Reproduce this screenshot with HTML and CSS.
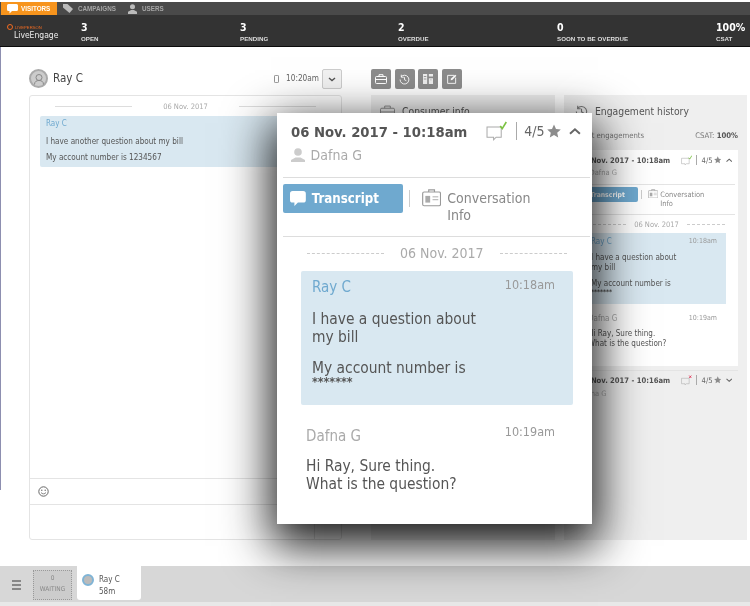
FILE: index.html
```html
<!DOCTYPE html>
<html lang="en">
<head>
<meta charset="utf-8">
<title>LiveEngage</title>
<link rel="stylesheet" href="styles.css">
</head>
<body>
<div class="app">
  <nav class="nav">
    <a class="nav-item active"><svg width="11" height="10" viewBox="0 0 11 10"><path d="M1.500 0h8A1.500 1.500 0 0 1 11 1.500v4A1.500 1.500 0 0 1 9.500 7H5L2.500 9.500V7h-1A1.500 1.500 0 0 1 0 5.500v-4A1.500 1.500 0 0 1 1.500 0z" fill="#fff"/></svg>VISITORS</a>
    <a class="nav-item"><svg width="10" height="9" viewBox="0 0 10 9"><path d="M0 0h4.500L10 5 6.500 9 0 3.500z" fill="#bbb"/></svg>CAMPAIGNS</a>
    <a class="nav-item"><svg width="9" height="10" viewBox="0 0 10 11"><circle cx="5" cy="3" r="2.800" fill="#bbb"/><path d="M0 11V8.500L3.500 6.500h3L10 8.500V11z" fill="#bbb"/></svg>USERS</a>
  </nav>
  <header class="stats">
    <div class="logo">
      <div class="logo-top"><span class="logo-ring"></span>LIVEPERSON</div>
      <div class="logo-name">LiveEngage</div>
    </div>
    <div class="stat-grid">
      <div class="stat"><b>3</b><span>OPEN</span></div>
      <div class="stat"><b>3</b><span>PENDING</span></div>
      <div class="stat"><b>2</b><span>OVERDUE</span></div>
      <div class="stat"><b>0</b><span>SOON TO BE OVERDUE</span></div>
      <div class="stat"><b>100%</b><span>CSAT</span></div>
    </div>
  </header>

  <main class="main">
    <div class="rail"></div>
    <section class="chat-col">
      <div class="chat-head">
        <span class="avatar"><svg width="12" height="12" viewBox="0 0 12 12"><circle cx="6" cy="4.500" r="3" fill="none" stroke="#888"/><path d="M1.500 11.500c0-3 2-4 4.500-4s4.500 1 4.500 4" fill="none" stroke="#888"/></svg></span>
        <span class="chat-name">Ray C</span>
        <svg class="phone" width="5" height="8" viewBox="0 0 6 10"><rect x=".5" y=".5" width="5" height="9" rx="1" fill="none" stroke="#777"/></svg>
        <span class="chat-time">10:20am</span>
        <span class="drop"><svg width="8" height="5" viewBox="0 0 8 5"><path d="M1 1l3 2.500L7 1" fill="none" stroke="#555" stroke-width="1.400"/></svg></span>
      </div>
      <div class="chat-box">
        <div class="chat-log">
          <div class="chat-date"><i></i><span>06 Nov. 2017</span><i></i></div>
          <div class="chat-bubble">
            <div class="chat-who">Ray C</div>
            <p>I have another question about my bill</p>
            <p>My account number is 1234567</p>
          </div>
        </div>
        <div class="emoji-row"><svg width="11" height="11" viewBox="0 0 11 11"><circle cx="5.500" cy="5.500" r="4.700" fill="none" stroke="#666"/><circle cx="3.800" cy="4.300" r=".7" fill="#666"/><circle cx="7.200" cy="4.300" r=".7" fill="#666"/><path d="M3 6.500c1 1.800 4 1.800 5 0" fill="none" stroke="#666" stroke-width=".8"/></svg></div>
        <div class="input-row"><span class="send"></span></div>
      </div>
    </section>

    <section class="side-col">
      <div class="tools">
        <span class="tool"><svg width="12" height="10" viewBox="0 0 12 10"><rect x=".5" y="2.500" width="11" height="7" rx="1" fill="none" stroke="#fff"/><path d="M4 2.500V.7h4v1.800M.5 5.500h11" fill="none" stroke="#fff"/></svg></span>
        <span class="tool"><svg width="11" height="11" viewBox="0 0 12 12"><path d="M2.200 3.200A4.800 4.800 0 1 1 1.200 6" fill="none" stroke="#fff"/><path d="M2.500 .8v2.700h2.700" fill="none" stroke="#fff"/><path d="M6 3.500V6.300l2 1" fill="none" stroke="#fff"/></svg></span>
        <span class="tool"><svg width="10" height="10" viewBox="0 0 12 12"><path d="M0 0h5v12H0zM7 0h5v3H7zM7 5h5v7H7z" fill="#eee"/><path d="M1 3h3M1 6h3M9 7h1" stroke="#8c8c8c"/></svg></span>
        <span class="tool"><svg width="10" height="10" viewBox="0 0 11 11"><path d="M8 1.500H.7v8.800h8.800V4" fill="none" stroke="#fff"/><path d="M4 7l.5-2L9 .7l1.300 1.300L5.800 6.500z" fill="#fff"/></svg></span>
      </div>
      <div class="panels">
        <div class="panel panel-consumer">
          <div class="panel-head"><svg width="15" height="13" viewBox="0 0 16 13"><rect x=".5" y="3" width="15" height="9.500" rx="1.500" fill="none" stroke="#888"/><path d="M5 3V.7h6V3M.5 7h15" fill="none" stroke="#888"/></svg>Consumer info</div>
        </div>
        <div class="panel panel-history">
          <div class="panel-head"><svg width="13" height="13" viewBox="0 0 12 12"><path d="M2.200 3.200A4.800 4.800 0 1 1 1.200 6" fill="none" stroke="#777"/><path d="M2.500 .8v2.700h2.700" fill="none" stroke="#777"/><path d="M6 3.500V6.300l2 1" fill="none" stroke="#777"/></svg>Engagement history</div>
          <div class="panel-sub"><span>Past engagements</span><span>CSAT: <b>100%</b></span></div>

          <article class="card card-mini">
            <div class="card-top">
              <div class="card-title">06 Nov. 2017 - 10:18am</div>
              <div class="rating">
                <svg class="bubble-icon" viewBox="0 0 20 20"><path d="M1 6h14v10H10l-2.500 2.500V16H1z" fill="none" stroke="#aaa"/><path d="M14 5l2 2.500L20 1" fill="none" stroke="#7cc243" stroke-width="1.600"/></svg>
                <i class="rate-sep"></i><span>4/5</span>
                <svg class="star" viewBox="0 0 14 14"><path d="M7 .5l2 4.500 4.800.5-3.600 3.200 1 4.800L7 11l-4.200 2.500 1-4.800L.2 5.500 5 5z" fill="#8c8c8c"/></svg>
                <svg class="chev" viewBox="0 0 12 8"><path d="M1 6.500L6 2l5 4.500" fill="none" stroke="#666" stroke-width="2"/></svg>
              </div>
            </div>
            <div class="card-agent"><svg class="agent-icon" viewBox="0 0 14 15"><circle cx="7" cy="4" r="3.800" fill="#ccc"/><path d="M0 15v-3l4.500-2.500h5L14 12v3z" fill="#ccc"/></svg>Dafna G</div>
            <div class="card-tabs">
              <span class="btn-transcript"><svg class="btn-icon" viewBox="0 0 18 17"><path d="M3 0h12a3 3 0 0 1 3 3v7a3 3 0 0 1-3 3H9l-4 4v-4H3a3 3 0 0 1-3-3V3a3 3 0 0 1 3-3z" fill="#fff"/></svg>Transcript</span>
              <i class="tab-sep"></i>
              <svg class="clip" viewBox="0 0 20 18"><rect x=".7" y="3" width="18.600" height="14.300" rx="1.500" fill="none" stroke="#999" stroke-width="1.200"/><path d="M7 3V.8h6V3" fill="none" stroke="#999" stroke-width="1.200"/><rect x="3.500" y="7" width="5" height="7" fill="#aaa"/><path d="M11 8h6M11 11h6" stroke="#aaa"/></svg>
              <span class="tab-info">Conversation<br>Info</span>
            </div>
            <div class="card-date"><i></i><span>06 Nov. 2017</span><i></i></div>
            <div class="msg msg-in">
              <div class="msg-head"><span class="msg-who">Ray C</span><span class="msg-time">10:18am</span></div>
              <p>I have a question about<br>my bill</p>
              <p>My account number is<span class="stars">*******</span></p>
            </div>
            <div class="msg msg-out">
              <div class="msg-head"><span class="msg-who">Dafna G</span><span class="msg-time">10:19am</span></div>
              <p>Hi Ray, Sure thing.<br>What is the question?</p>
            </div>
          </article>

          <article class="row-closed">
            <div class="card-top">
              <div class="card-title">06 Nov. 2017 - 10:16am</div>
              <div class="rating">
                <svg class="bubble-icon" viewBox="0 0 20 20"><path d="M1 6h14v10H10l-2.500 2.500V16H1z" fill="none" stroke="#aaa"/><path d="M15 1l4 4.500M19 1l-4 4.500" stroke="#e0375a" stroke-width="1.600"/></svg>
                <i class="rate-sep"></i><span>4/5</span>
                <svg class="star" viewBox="0 0 14 14"><path d="M7 .5l2 4.500 4.800.5-3.600 3.200 1 4.800L7 11l-4.200 2.500 1-4.800L.2 5.500 5 5z" fill="#8c8c8c"/></svg>
                <svg class="chev" viewBox="0 0 12 8"><path d="M1 1.500L6 6l5-4.500" fill="none" stroke="#666" stroke-width="2"/></svg>
              </div>
            </div>
            <div class="card-agent">Dafna G</div>
          </article>
        </div>
      </div>
    </section>
  </main>

  <footer class="dock">
    <span class="burger"><i></i><i></i><i></i></span>
    <div class="waiting"><span>0</span><span>WAITING</span></div>
    <div class="visitor-tab">
      <span class="visitor-avatar"></span>
      <div class="visitor-text"><span>Ray C</span><span>58m</span></div>
    </div>
  </footer>

  <article class="card card-popup">
    <div class="card-top">
      <div class="card-title">06 Nov. 2017 - 10:18am</div>
      <div class="rating">
        <svg class="bubble-icon" viewBox="0 0 20 20"><path d="M1 6h14v10H10l-2.500 2.500V16H1z" fill="none" stroke="#aaa"/><path d="M14 5l2 2.500L20 1" fill="none" stroke="#7cc243" stroke-width="1.600"/></svg>
        <i class="rate-sep"></i><span>4/5</span>
        <svg class="star" viewBox="0 0 14 14"><path d="M7 .5l2 4.500 4.800.5-3.600 3.200 1 4.800L7 11l-4.200 2.500 1-4.800L.2 5.500 5 5z" fill="#8c8c8c"/></svg>
        <svg class="chev" viewBox="0 0 12 8"><path d="M1 6.500L6 2l5 4.500" fill="none" stroke="#666" stroke-width="2"/></svg>
      </div>
    </div>
    <div class="card-agent"><svg class="agent-icon" viewBox="0 0 14 15"><circle cx="7" cy="4" r="3.800" fill="#ccc"/><path d="M0 15v-3l4.500-2.500h5L14 12v3z" fill="#ccc"/></svg>Dafna G</div>
    <div class="card-tabs">
      <span class="btn-transcript"><svg class="btn-icon" viewBox="0 0 18 17"><path d="M3 0h12a3 3 0 0 1 3 3v7a3 3 0 0 1-3 3H9l-4 4v-4H3a3 3 0 0 1-3-3V3a3 3 0 0 1 3-3z" fill="#fff"/></svg>Transcript</span>
      <i class="tab-sep"></i>
      <svg class="clip" viewBox="0 0 20 18"><rect x=".7" y="3" width="18.600" height="14.300" rx="1.500" fill="none" stroke="#999" stroke-width="1.200"/><path d="M7 3V.8h6V3" fill="none" stroke="#999" stroke-width="1.200"/><rect x="3.500" y="7" width="5" height="7" fill="#aaa"/><path d="M11 8h6M11 11h6" stroke="#aaa"/></svg>
      <span class="tab-info">Conversation<br>Info</span>
    </div>
    <div class="card-date"><i></i><span>06 Nov. 2017</span><i></i></div>
    <div class="msg msg-in">
      <div class="msg-head"><span class="msg-who">Ray C</span><span class="msg-time">10:18am</span></div>
      <p>I have a question about<br>my bill</p>
      <p>My account number is<span class="stars">*******</span></p>
    </div>
    <div class="msg msg-out">
      <div class="msg-head"><span class="msg-who">Dafna G</span><span class="msg-time">10:19am</span></div>
      <p>Hi Ray, Sure thing.<br>What is the question?</p>
    </div>
  </article>
</div>
</body>
</html>
```

FILE: styles.css
```css
* { box-sizing: border-box; }
html, body { margin: 0; padding: 0; }
body { font-family: "DejaVu Sans Condensed", "DejaVu Sans", sans-serif; font-stretch: condensed; background: #fff; color: #555; }
p { margin: 0; }
.app { position: relative; width: 750px; height: 606px; overflow: hidden; padding-top: 2px; background: #fff; display: flex; flex-direction: column; filter: blur(.35px); }

.nav { flex: none; background: #4a4a4a; display: flex; height: 13px; }
.nav-item { display: flex; align-items: center; gap: 5px; padding-left: 6px; font: bold 6.300px "Liberation Sans", sans-serif; color: #a5a5a5; }
.nav-item svg { flex: none; }
.nav-item:nth-child(1) { margin-left: 1px; width: 56px; gap: 3px; background: #f7941d; color: #fff; }
.nav-item:nth-child(2) { width: 65px; }

.stats { flex: none; height: 32px; background: #333; border-bottom: 1px solid #0c0c0c; display: flex; color: #fff; }
.logo { flex: none; width: 81px; padding: 9px 0 0 7px; }
.logo-top { display: flex; align-items: center; gap: 2px; font: 4.200px "Liberation Sans", sans-serif; color: #f26b21; height: 6px; }
.logo-ring { width: 6px; height: 6px; border: 1.500px solid #f26b21; border-radius: 50%; }
.logo-name { font-size: 8.500px; line-height: 10px; margin-left: 7px; color: #eee; }
.stat-grid { flex: 1; min-width: 0; display: grid; grid-template-columns: 159px 158px 159px 159px 1fr; }
.stat { padding-top: 5px; display: flex; flex-direction: column; }
.stat b { font-size: 10.500px; line-height: 14px; }
.stat span { font: bold 6.200px/9px "Liberation Sans", sans-serif; color: #ddd; white-space: nowrap; }

.main { flex: none; height: 519px; display: flex; }
.rail { width: 1px; height: 443px; background: #8d8fb0; }
.chat-col { width: 313px; margin-left: 28px; padding-top: 22px; display: flex; flex-direction: column; }
.chat-head { height: 26px; display: flex; align-items: flex-start; }
.avatar { width: 19px; height: 19px; border-radius: 50%; background: #ccc; border: 2px solid #aaa; display: flex; align-items: center; justify-content: center; }
.chat-name { font-size: 11.500px; line-height: 19px; margin-left: 5px; color: #444; flex: 1; }
.phone { margin-top: 6px; }
.chat-time { font-size: 8.200px; line-height: 19px; margin-left: 7px; color: #666; }
.drop { width: 20px; height: 20px; margin-left: 3px; border: 1px solid #ccc; border-radius: 2px; background: #f2f2f2; display: flex; align-items: center; justify-content: center; }
.chat-box { height: 445px; border: 1px solid #e4e4e4; border-radius: 3px; display: flex; flex-direction: column; }
.chat-log { flex: 1; padding: 0 10px; }
.chat-date { height: 20px; display: flex; align-items: center; padding: 0 15px; gap: 31px; font-size: 7.500px; color: #aaa; }
.chat-date i { flex: 1; border-top: 1px solid #ddd; }
.chat-bubble { height: 51px; background: #d9e8f1; padding: 3px 6px; border-radius: 2px; font-size: 8.100px; color: #555; }
.chat-who { color: #6fa9cf; font-size: 8px; line-height: 10px; margin-bottom: 7px; }
.chat-bubble p { line-height: 10px; margin-bottom: 6px; }
.emoji-row { height: 26px; border-top: 1px solid #e4e4e4; padding: 7px 8px; }
.emoji-row svg { display: block; }
.input-row { height: 35px; border-top: 1px solid #e4e4e4; display: flex; justify-content: flex-end; }
.send { width: 27px; border-left: 1px solid #e4e4e4; }

.side-col { width: 376px; margin-left: 29px; padding-top: 22px; display: flex; flex-direction: column; }
.tools { height: 26px; display: flex; gap: 3.500px; align-items: flex-start; }
.tool { width: 20px; height: 20px; background: #8c8c8c; border-radius: 2px; display: flex; align-items: center; justify-content: center; }
.panels { height: 445px; display: flex; gap: 9px; }
.panel { width: 184px; background: #efefef; padding: 0 9px; }
.panel-head { height: 32px; display: flex; align-items: center; gap: 7px; font-size: 10.300px; color: #555; }
.panel-history { width: 183px; padding: 0 9px 0 8px; }
.panel-history .panel-head svg { margin-left: 3px; }
.panel-sub { height: 23px; display: flex; justify-content: space-between; font-size: 7.700px; color: #777; padding: 4px 0 0 8px; }
.panel-sub b { color: #555; }

.card { background: #fff; font-size: 16px; }
.card-top { display: flex; justify-content: space-between; align-items: center; }
.card-title { font-weight: bold; color: #555; white-space: nowrap; }
.rating { flex: none; display: flex; align-items: center; font-size: .875em; color: #666; }
.bubble-icon { width: 1.450em; height: 1.450em; }
.rate-sep { width: 1px; height: 1.350em; background: #aaa; margin: 0 .55em 0 .65em; }
.star { width: 1em; height: 1em; margin-left: .15em; }
.chev { width: .85em; height: .6em; margin-left: .6em; }
.card-agent { display: flex; align-items: center; gap: .4em; font-size: .875em; color: #aaa; line-height: 1.200em; }
.agent-icon { width: 1em; height: 1.070em; }
.card-tabs { display: flex; align-items: flex-start; }
.btn-transcript { display: flex; align-items: center; gap: .45em; background: #6fa9cf; color: #fff; font-weight: bold; border-radius: 2px; }
.btn-icon { width: 1.200em; height: 1.150em; }
.tab-sep { width: 1px; background: #ccc; }
.clip { width: 1.200em; height: 1.100em; }
.tab-info { color: #888; }
.card-date { display: flex; align-items: center; color: #aaa; }
.card-date i { border-top: 1px dashed #ccc; display: block; }
.msg-head { display: flex; justify-content: space-between; }
.msg-who { color: #6fa9cf; }
.msg-out .msg-who { color: #aaa; }
.msg-time { color: #999; }
.msg p { color: #555; }
.stars { display: block; font-size: .8em; font-weight: bold; }

.card-popup { position: absolute; left: 277px; top: 113px; width: 315px; height: 411px; padding: 7px 0 0; box-shadow: 0 16px 44px 6px rgba(0,0,0,.9); }
.card-popup .card-top { padding: 0 11px 0 14px; height: 22px; }
.card-popup .card-title { font-size: 14.700px; }
.card-popup .card-agent { padding: 0 14px; margin-top: 3px; height: 20px; }
.card-popup .card-tabs { margin: 12px 2px 0 6px; padding: 6px 0 0; border-top: 1px solid #ddd; height: 60px; border-bottom: 1px solid #ddd; }
.card-popup .btn-transcript { width: 120px; height: 29px; font-size: 13.200px; padding-left: 7px; }
.card-popup .tab-sep { height: 17px; margin: 6px 12px 0 6px; }
.card-popup .clip { font-size: 16px; margin: 5px 6px 0 0; }
.card-popup .tab-info { font-size: 14px; line-height: 17px; margin-top: 6px; }
.card-popup .card-date { margin: 7px 25px 0 30px; height: 18px; gap: 16px; font-size: 14px; }
.card-popup .card-date i:first-child { flex: 0 0 77px; }
.card-popup .card-date i:last-child { flex: 0 0 67px; }
.card-popup .msg { font-size: 15px; }
.card-popup .msg-in { margin: 9px 19px 0 24px; height: 134px; padding: 5px 18px 0 11px; background: #d9e8f1; border-radius: 2px; }
.card-popup .msg-out { margin: 20px 37px 0 29px; }
.card-popup .msg-time { font-size: 12.500px; line-height: 18px; }
.card-popup .msg-who { line-height: 20px; margin-top: 1px; }
.card-popup .msg-out .msg-time { margin-top: -2px; }
.card-popup .msg p { font-size: 15.400px; line-height: 18px; }
.card-popup .msg-in p { margin-top: 13px; }
.card-popup .msg-in p + p { margin-top: 13px; }
.card-popup .msg-out p { margin-top: 11px; }
.card-popup .stars { line-height: 10px; }

.card-mini { width: 166px; height: 216px; padding: 4px 0 0; font-size: 8.600px; }
.card-mini .card-title, .row-closed .card-title { font-size: 7.600px; }
.card-mini .card-top { padding: 0 6px 0 7px; height: 12px; }
.card-mini .card-agent { padding: 0 7px; height: 10px; margin-top: 2px; }
.card-mini .card-tabs { margin: 6px 3px 0; padding: 2px 0 0; border-top: 1px solid #e4e4e4; height: 31px; border-bottom: 1px solid #e4e4e4; }
.card-mini .btn-transcript { width: 63px; height: 15px; font-size: 6.800px; padding-left: 4px; }
.card-mini .tab-sep { height: 9px; margin: 3px 6px 0 3px; }
.card-mini .clip { margin: 2px 3px 0 0; }
.card-mini .tab-info { font-size: 7.400px; line-height: 9px; margin-top: 3px; margin-left: -1px; }
.card-mini .card-date { margin: 4px 13px 0 16px; height: 10px; gap: 8px; font-size: 7.500px; }
.card-mini .card-date i { flex: 1; }
.card-mini .msg { font-size: 8px; }
.card-mini .msg-in { margin: 4px 12px 0 13px; height: 71px; padding: 4px 9px 0 6px; background: #d9e8f1; }
.card-mini .msg-out { margin: 10px 21px 0 16px; }
.card-mini .msg-time { font-size: 7px; }
.card-mini .msg p { line-height: 9.500px; margin-top: 7px; }
.card-mini .msg-out p { margin-top: 6px; }
.card-mini .stars { line-height: 6px; }

.row-closed { margin-top: 4px; padding: 3px 0 0; width: 166px; border-top: 1px solid #e4e4e4; font-size: 8.600px; }
.row-closed .card-top { padding: 0 6px 0 7px; height: 12px; }
.row-closed .card-agent { padding: 0 7px; height: 10px; margin-top: 3px; }

.dock { flex: none; height: 40px; background: #d7d7d7; border-bottom: 4px solid #e8e8e8; display: flex; align-items: flex-start; }
.burger { width: 33px; padding: 14px 12px 0; display: flex; flex-direction: column; gap: 2.500px; }
.burger i { display: block; height: 1.500px; background: #888; }
.waiting { width: 39px; height: 30px; margin-top: 4px; border: 1px dotted #999; background: #ccc; display: flex; flex-direction: column; align-items: center; font-size: 6.500px; line-height: 10.500px; color: #888; padding-top: 2px; }
.visitor-tab { width: 64px; height: 34px; margin-left: 5px; background: #fff; border-radius: 0 0 3px 3px; display: flex; gap: 5px; padding: 8px 0 0 5px; }
.visitor-avatar { width: 12px; height: 12px; border-radius: 50%; border: 2px solid #7fb4d6; background: #bbb; }
.visitor-text { display: flex; flex-direction: column; font-size: 8px; line-height: 12px; color: #555; }
```
